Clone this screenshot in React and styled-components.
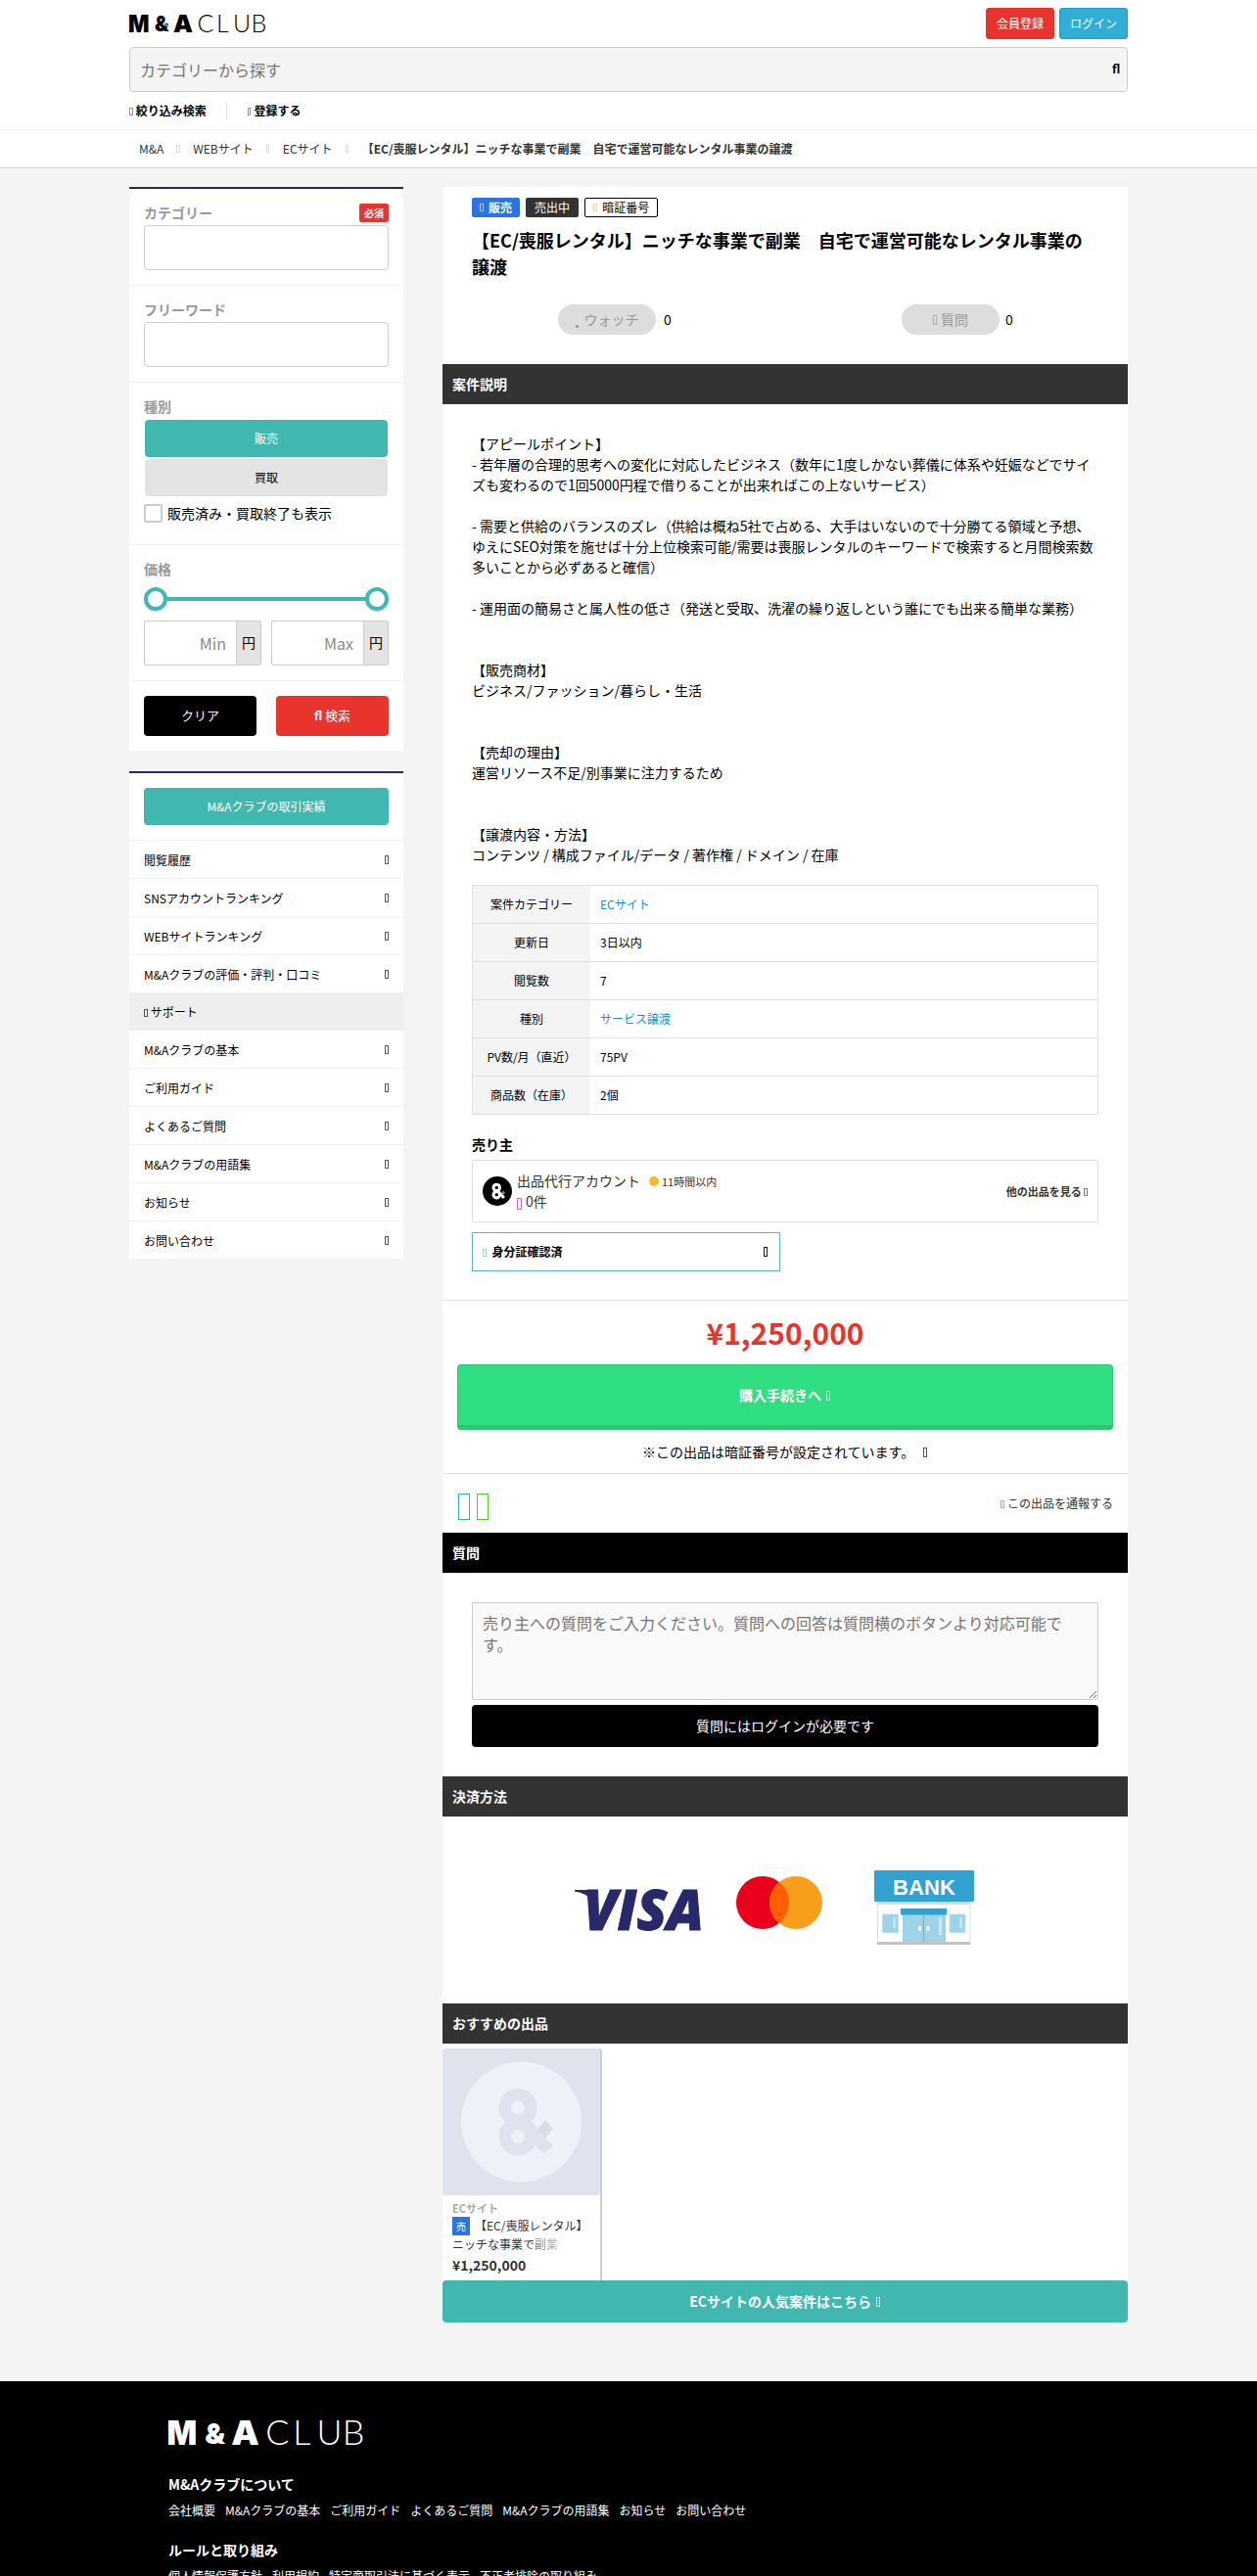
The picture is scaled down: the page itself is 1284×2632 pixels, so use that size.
import styled, { createGlobalStyle } from "styled-components"

const sideLinks = ["閲覧履歴", "SNSアカウントランキング", "WEBサイトランキング", "M&Aクラブの評価・評判・口コミ"]
const supportLinks = ["M&Aクラブの基本", "ご利用ガイド", "よくあるご質問", "M&Aクラブの用語集", "お知らせ", "お問い合わせ"]

const specs = [
    { name: "案件カテゴリー", value: "ECサイト", link: true },
    { name: "更新日", value: "3日以内" },
    { name: "閲覧数", value: "7" },
    { name: "種別", value: "サービス譲渡", link: true },
    { name: "PV数/月（直近）", value: "75PV" },
    { name: "商品数（在庫）", value: "2個" },
]

const description = `【アピールポイント】
- 若年層の合理的思考への変化に対応したビジネス（数年に1度しかない葬儀に体系や妊娠などでサイズも変わるので1回5000円程で借りることが出来ればこの上ないサービス）

- 需要と供給のバランスのズレ（供給は概ね5社で占める、大手はいないので十分勝てる領域と予想、ゆえにSEO対策を施せば十分上位検索可能/需要は喪服レンタルのキーワードで検索すると月間検索数多いことから必ずあると確信）

- 運用面の簡易さと属人性の低さ（発送と受取、洗濯の繰り返しという誰にでも出来る簡単な業務）


【販売商材】
ビジネス/ファッション/暮らし・生活


【売却の理由】
運営リソース不足/別事業に注力するため


【譲渡内容・方法】
コンテンツ / 構成ファイル/データ / 著作権 / ドメイン / 在庫`

const footerGroups = [
    { title: "M&Aクラブについて", links: ["会社概要", "M&Aクラブの基本", "ご利用ガイド", "よくあるご質問", "M&Aクラブの用語集", "お知らせ", "お問い合わせ"] },
    { title: "ルールと取り組み", links: ["個人情報保護方針", "利用規約", "特定商取引法に基づく表示", "不正者排除の取り組み"] },
]

const Teal = "#40b8b0"
const Red = "#e9342d"
const Line = "#f2f2f2"

const Logo = ({ width, height, color, dot }) => (
    <LogoSvg width={width} height={height} viewBox="0 0 140 18" preserveAspectRatio="none" fill={color}>
        <g fontFamily="Inter" fontWeight="900" fontSize="24.7">
            <text x="-1" y="18" textLength="21.5" lengthAdjust="spacingAndGlyphs">M</text>
            <text x="26" y="17" fontSize="21" textLength="14.5" lengthAdjust="spacingAndGlyphs">&amp;</text>
            <text x="45" y="18" textLength="20" lengthAdjust="spacingAndGlyphs">A</text>
        </g>
        <g fontFamily="Lato" fontWeight="300" fontSize="25">
            <text x="69.5" y="18">C</text>
            <text x="89" y="18">L</text>
            <text x="106" y="18">U</text>
            <text x="124.5" y="18">B</text>
        </g>
        {dot && <path d="M38 9l2 2-2 2-2-2z" fill={dot} />}
    </LogoSvg>
)

// round mark with the "&" built of two rings and a leg
const Mark = ({ ring, accent }) => (
    <g>
        <circle cx="77" cy="60.5" r="13.2" fill="none" stroke={ring} strokeWidth="12.6" />
        <circle cx="77" cy="90" r="13.2" fill="none" stroke={ring} strokeWidth="12.6" />
        <path d="M84 77L108 103.5" stroke={ring} strokeWidth="12.5" />
        <path d="M105 73.5l8 8.8-8 8.7-8.5-8.3z" fill={accent} />
    </g>
)

const Visa = () => (
    <svg width="130" height="42" viewBox="0 0 130 42">
        <path d="M0 1h14l5 12Q12 4 0 2.500z" fill="#29286b" />
        <text x="9" y="41.500" fontFamily="Open Sans" fontWeight="800" fontStyle="italic" fontSize="57" fill="#29286b" stroke="#29286b" strokeWidth="1" textLength="123" lengthAdjust="spacingAndGlyphs">VISA</text>
    </svg>
)

const Mastercard = () => (
    <svg width="88" height="54" viewBox="0 0 88 54">
        <circle cx="27" cy="27" r="27" fill="#eb001b" />
        <circle cx="61" cy="27" r="27" fill="#f79e1b" />
        <path d="M44 6a27 27 0 0 1 0 42a27 27 0 0 1 0-42z" fill="#ff5f00" />
    </svg>
)

const Bank = () => (
    <svg width="102" height="76" viewBox="0 0 102 76">
        <rect x="3.500" y="32" width="94.500" height="42" fill="#fff" stroke="#ddd" />
        <rect x="3" y="32" width="95" height="3" fill="#d5dade" />
        <rect width="102" height="32" rx="1" fill="#31a2d0" />
        <text x="51" y="24.500" textAnchor="middle" fontFamily="Liberation Sans" fontWeight="700" fontSize="22" fill="#fff" textLength="64">BANK</text>
        <rect x="29" y="44" width="44" height="30" fill="#9fd3e8" />
        <rect x="27" y="39" width="47" height="6.500" fill="#31a2d0" />
        <path d="M50.500 45v29" stroke="#6fb0cb" />
        <rect x="45" y="57" width="3" height="4.500" fill="#fff" />
        <rect x="53.500" y="57" width="3" height="4.500" fill="#fff" />
        <path d="M67.500 48v18" stroke="#d5edf6" strokeWidth="2.500" />
        <rect x="8.500" y="45" width="16" height="18.500" fill="#9fd3e8" stroke="#bcdfec" />
        <rect x="77" y="45" width="16" height="18.500" fill="#9fd3e8" stroke="#bcdfec" />
        <path d="M20.500 48v11M88.500 48v11" stroke="#d5edf6" strokeWidth="2" />
        <rect x="3" y="73" width="95" height="3" fill="#c3c3c3" />
    </svg>
)

const App = () => {
    return (
        <Page>
            <GlobalStyle />
            <Header>
                <Container>
                    <HeaderTop>
                        <Logo width={140} height={18} color="#000" dot="#2e9fd0" />
                        <HeaderButtons>
                            <HeaderButton $bg={Red}>会員登録</HeaderButton>
                            <HeaderButton $bg="#2fafd6" $edge="#2a9cc0">ログイン</HeaderButton>
                        </HeaderButtons>
                    </HeaderTop>
                    <SearchBar><span>カテゴリーから探す</span><SearchGlyph>fl</SearchGlyph></SearchBar>
                    <HeaderMenu>
                        <MenuItem><Icon $color="#555577" /> 絞り込み検索</MenuItem>
                        <MenuItem><Icon $color="#555577" /> 登録する</MenuItem>
                    </HeaderMenu>
                </Container>
            </Header>
            <Breadcrumb>
                <Container>
                    <Crumbs>
                        <span>M&amp;A</span><Icon $color="#ccc" />
                        <span>WEBサイト</span><Icon $color="#ccc" />
                        <span>ECサイト</span><Icon $color="#ccc" />
                        <b>【EC/喪服レンタル】ニッチな事業で副業　自宅で運営可能なレンタル事業の譲渡</b>
                    </Crumbs>
                </Container>
            </Breadcrumb>

            <Columns>
                <Sidebar>
                    <SideCard>
                        <Field>
                            <Label>カテゴリー<Required>必須</Required></Label>
                            <Input />
                        </Field>
                        <Field>
                            <Label>フリーワード</Label>
                            <Input />
                        </Field>
                        <Field>
                            <Label>種別</Label>
                            <Toggles>
                                <Toggle $active>販売</Toggle>
                                <Toggle>買取</Toggle>
                            </Toggles>
                            <CheckRow><CheckBox />販売済み・買取終了も表示</CheckRow>
                        </Field>
                        <Field>
                            <Label>価格</Label>
                            <Slider><Handle /><Track /><Handle /></Slider>
                            <PriceRow>
                                <PriceInput><PriceHint>Min</PriceHint><Unit>円</Unit></PriceInput>
                                <PriceInput><PriceHint>Max</PriceHint><Unit>円</Unit></PriceInput>
                            </PriceRow>
                        </Field>
                        <FormButtons>
                            <FormButton $bg="#000">クリア</FormButton>
                            <FormButton $bg={Red}><SearchGlyph $light>fl</SearchGlyph>&nbsp;検索</FormButton>
                        </FormButtons>
                    </SideCard>

                    <SideCard>
                        <ResultsWrap><Results>M&amp;Aクラブの取引実績</Results></ResultsWrap>
                        <LinkList>
                            {sideLinks.map((text) => <SideLink key={text}>{text}<Icon /></SideLink>)}
                        </LinkList>
                        <SupportTitle><Icon />&nbsp;サポート</SupportTitle>
                        <LinkList>
                            {supportLinks.map((text) => <SideLink key={text}>{text}<Icon /></SideLink>)}
                        </LinkList>
                    </SideCard>
                </Sidebar>

                <Main>
                    <Intro>
                        <Tags>
                            <Tag $bg="#2b74e2" $bold><Icon />販売</Tag>
                            <Tag $bg="#333" $pad="9px">売出中</Tag>
                            <Tag $outlined><Icon $color="#e8c94a" />暗証番号</Tag>
                        </Tags>
                        <Title>【EC/喪服レンタル】ニッチな事業で副業　自宅で運営可能なレンタル事業の譲渡</Title>
                        <Counters>
                            <Counter $gap="8px"><Pill><WatchGlyph />ウォッチ</Pill>0</Counter>
                            <Counter $gap="6px"><Pill><Icon />&nbsp;質問</Pill>0</Counter>
                        </Counters>
                    </Intro>

                    <Bar>案件説明</Bar>
                    <Detail>
                        <Description>{description}</Description>
                        <Specs>
                            {specs.map((spec) => (
                                <SpecRow key={spec.name}>
                                    <SpecName>{spec.name}</SpecName>
                                    <SpecValue $link={spec.link}>{spec.value}</SpecValue>
                                </SpecRow>
                            ))}
                        </Specs>
                        <SellerTitle>売り主</SellerTitle>
                        <Seller>
                            <svg width="30" height="30" viewBox="18.500 13.500 123 123">
                                <circle cx="80" cy="75" r="61.500" fill="#000" />
                                <Mark ring="#fff" accent="#2e9fd0" />
                            </svg>
                            <SellerInfo>
                                <div>出品代行アカウント<Online /><small>11時間以内</small></div>
                                <div><Icon $color="#d4578e" $size="17px" $drop="-3px" /> 0件</div>
                            </SellerInfo>
                            <OtherItems>他の出品を見る <Icon /></OtherItems>
                        </Seller>
                        <Identity>
                            <span><Icon $color="#6cb8d6" />&nbsp; 身分証確認済</span>
                            <Icon $size="15px" $drop="-2px" />
                        </Identity>
                    </Detail>

                    <Purchase>
                        <Price>¥1,250,000</Price>
                        <BuyButton>購入手続きへ&nbsp;<Icon $left="2px" /></BuyButton>
                        <Notice>※この出品は暗証番号が設定されています。&nbsp;<Icon $left="6px" /></Notice>
                    </Purchase>
                    <Share>
                        <ShareIcons><Icon $color="#1d9bf0" $size="39px" /><Icon $color="#3ace01" $size="39px" /></ShareIcons>
                        <span><Icon $color="#e0508f" /> この出品を通報する</span>
                    </Share>

                    <Bar $bg="#000">質問</Bar>
                    <Question>
                        <TextArea placeholder="売り主への質問をご入力ください。質問への回答は質問横のボタンより対応可能です。" />
                        <WideButton $bg="#000">質問にはログインが必要です</WideButton>
                    </Question>

                    <Bar>決済方法</Bar>
                    <Payments><Visa /><Mastercard /><Bank /></Payments>

                    <Bar>おすすめの出品</Bar>
                    <Recommend>
                        <ItemCard>
                            <svg width="161" height="150" viewBox="0 0 161 150">
                                <rect width="161" height="150" rx="3" fill="#e0e2ed" />
                                <circle cx="80.500" cy="75" r="61.500" fill="#eff1f8" />
                                <Mark ring="#e0e2ed" accent="#dadce0" />
                            </svg>
                            <ItemBody>
                                <ItemCategory>ECサイト</ItemCategory>
                                <ItemName><SaleMark>売</SaleMark>【EC/喪服レンタル】<br />ニッチな事業で<Fade>副業</Fade></ItemName>
                                <ItemPrice>¥1,250,000</ItemPrice>
                            </ItemBody>
                        </ItemCard>
                    </Recommend>
                    <WideButton $bg={Teal} $bold>ECサイトの人気案件はこちら&nbsp;<Icon $left="2px" /></WideButton>
                </Main>
            </Columns>

            <Footer>
                <Logo width={200} height={25} color="#fff" />
                {footerGroups.map((group) => (
                    <FooterGroup key={group.title}>
                        <FooterTitle>{group.title}</FooterTitle>
                        <FooterLinks>
                            {group.links.map((link) => <span key={link}>{link}</span>)}
                        </FooterLinks>
                    </FooterGroup>
                ))}
            </Footer>
        </Page>
    )
}

const GlobalStyle = createGlobalStyle`
*{ box-sizing: border-box; }
body{
    margin: 0;
    background: #f4f4f4;
    color: #000;
    font-family: "Noto Sans CJK JP", sans-serif;
    font-size: 14px;
    line-height: 1.5;
}
`

const Page = styled.div`
height: 2632px;
overflow: hidden;
`
const LogoSvg = styled.svg`
display: block;
overflow: visible;
`
// thin empty box, scales with the text beside it
const Icon = styled.i`
display: inline-block;
flex: none;
font-size: ${(p) => p.$size || "inherit"};
width: 0.3em;
height: 0.7em;
margin-left: ${(p) => p.$left || 0};
margin-right: 0.04em;
vertical-align: ${(p) => p.$drop || "baseline"};
border: 1px solid ${(p) => p.$color || "currentColor"};
opacity: ${(p) => (p.$size ? 0.9 : 0.65)};
`
const SearchGlyph = styled.span`
font-family: Lato, sans-serif;
font-size: 13px;
font-weight: 900;
color: ${(p) => (p.$light ? "#fff" : "#000")};
`
const WatchGlyph = styled.i`
display: inline-block;
width: 3px;
height: 3px;
margin-right: 6px;
vertical-align: -3px;
border-radius: 1px;
background: #999;
`
const Container = styled.div`
width: 1020px;
margin: 0 auto;
`
const Header = styled.header`
background: #fff;
height: 133px;
border-bottom: 1px solid ${Line};
`
const HeaderTop = styled.div`
display: flex;
align-items: center;
justify-content: space-between;
height: 48px;
`
const HeaderButtons = styled.div`
display: flex;
gap: 5px;
`
const HeaderButton = styled.div`
width: 70px;
height: 32px;
line-height: 32px;
text-align: center;
font-size: 12px;
color: #fff;
background: ${(p) => p.$bg};
border-radius: 4px;
box-shadow: inset 0 0 0 1px ${(p) => p.$edge || p.$bg};
`
const SearchBar = styled.div`
display: flex;
align-items: center;
justify-content: space-between;
height: 46px;
padding: 0 7px 0 10px;
border: 1px solid #ccc;
border-radius: 4px;
background: #f4f4f4;
font-size: 16px;
color: #757575;
`
const HeaderMenu = styled.div`
display: flex;
align-items: center;
height: 38px;
font-size: 12px;
font-weight: bold;
`
const MenuItem = styled.div`
line-height: 18px;
& + &{
    margin-left: 20px;
    padding-left: 21px;
    border-left: 1px solid #e0e0e0;
}
`
const Breadcrumb = styled.nav`
background: #fff;
height: 39px;
border-bottom: 1px solid #d5d5d5;
`
const Crumbs = styled.div`
display: flex;
align-items: center;
gap: 13px;
height: 38px;
padding-left: 10px;
font-size: 12px;
color: #333;
`
const Columns = styled.div`
display: flex;
justify-content: space-between;
align-items: flex-start;
width: 1020px;
height: 2261px;
margin: 0 auto;
padding-top: 19px;
`
const Sidebar = styled.aside`
width: 280px;
`
const SideCard = styled.section`
background: #fff;
border-top: 2px solid #2a2a5e;
margin-bottom: 21px;
`
const Field = styled.div`
padding: 15px;
border-bottom: 1px solid ${Line};
`
const Label = styled.div`
display: flex;
justify-content: space-between;
align-items: center;
height: 22px;
line-height: 19px;
padding-bottom: 3px;
font-weight: bold;
color: #999;
`
const Required = styled.span`
width: 30px;
height: 19px;
line-height: 19px;
text-align: center;
font-size: 10px;
color: #fff;
background: ${Red};
border-radius: 2px;
`
const Input = styled.div`
height: 46px;
border: 1px solid #ccc;
border-radius: 4px;
`
const Toggles = styled.div`
display: flex;
flex-direction: column;
gap: 2px;
padding: 1px 1px 0;
`
const Toggle = styled.div`
height: 38px;
line-height: 38px;
text-align: center;
font-size: 12px;
border-radius: 4px;
color: ${(p) => (p.$active ? "#fff" : "#000")};
background: ${(p) => (p.$active ? Teal : "#e4e4e4")};
`
const CheckRow = styled.div`
display: flex;
align-items: center;
gap: 5px;
height: 34px;
`
const CheckBox = styled.span`
width: 19px;
height: 19px;
border: 2px solid #ccc;
border-radius: 2px;
`
const Slider = styled.div`
display: flex;
align-items: center;
height: 24px;
margin: 6px 0 10px;
`
const Handle = styled.span`
width: 24px;
height: 24px;
border: 4px solid ${Teal};
border-radius: 50%;
box-shadow: 0 1px 2px rgba(80, 80, 200, 0.35);
`
const Track = styled.span`
flex: 1;
height: 4px;
background: ${Teal};
`
const PriceRow = styled.div`
display: flex;
gap: 10px;
`
const PriceInput = styled.div`
display: flex;
flex: 1;
height: 46px;
border: 1px solid #ccc;
border-radius: 2px;
`
const PriceHint = styled.span`
flex: 1;
padding-right: 10px;
line-height: 44px;
text-align: right;
font-size: 16px;
color: #888;
`
const Unit = styled.span`
width: 25px;
line-height: 43px;
text-align: center;
border-left: 1px solid #ccc;
background: #e4e4e4;
`
const FormButtons = styled.div`
display: flex;
justify-content: space-between;
padding: 15px;
`
const FormButton = styled.div`
width: 115px;
height: 41px;
line-height: 40px;
text-align: center;
font-size: 13px;
color: #fff;
background: ${(p) => p.$bg};
border-radius: 4px;
`
const ResultsWrap = styled.div`
padding: 15px;
border-bottom: 1px solid ${Line};
`
const Results = styled.div`
height: 38px;
line-height: 38px;
text-align: center;
font-size: 12px;
color: #fff;
background: ${Teal};
border-radius: 4px;
`
const LinkList = styled.div`
font-size: 12px;
`
const SideLink = styled.div`
display: flex;
justify-content: space-between;
align-items: center;
height: 39px;
padding: 1px 15px 0;
line-height: 17px;
border-bottom: 1px solid ${Line};
&:last-child{
    height: 38px;
    border-bottom: 0;
}
`
const SupportTitle = styled.div`
height: 39px;
line-height: 39px;
padding: 0 15px;
font-size: 12px;
background: #eee;
`
const Main = styled.main`
width: 700px;
background: #fff;
`
const Intro = styled.div`
height: 181px;
padding: 11px 30px 0;
`
const Tags = styled.div`
display: flex;
gap: 6px;
`
const Tag = styled.span`
display: flex;
align-items: center;
gap: 5px;
height: 20px;
line-height: 18px;
padding: 0 ${(p) => p.$pad || "8px"};
font-size: 12px;
font-weight: ${(p) => (p.$bold ? 700 : 400)};
color: ${(p) => (p.$outlined ? "#000" : "#fff")};
background: ${(p) => p.$bg || "#fff"};
border: ${(p) => (p.$outlined ? "1px solid #000" : "0")};
border-radius: 2px;
`
const Title = styled.h1`
margin: 10px 0 25px;
font-size: 18px;
line-height: 27px;
`
const Counters = styled.div`
display: flex;
padding: 0 20px 0 88px;
`
const Counter = styled.div`
display: flex;
align-items: center;
gap: ${(p) => p.$gap};
width: 351px;
&:last-child{ width: 110px; }
`
const Pill = styled.span`
flex: none;
width: 100px;
height: 31px;
line-height: 31px;
text-align: center;
color: #999;
background: #ddd;
border-radius: 16px;
`
const Bar = styled.h2`
margin: 0;
height: 41px;
line-height: 41px;
padding-left: 10px;
font-size: 14px;
color: #fff;
background: ${(p) => p.$bg || "#333"};
`
const Detail = styled.div`
height: 915px;
padding: 30px 30px 0;
`
const Description = styled.div`
white-space: pre-wrap;
line-height: 21px;
margin-bottom: 20px;
`
const Specs = styled.div`
border: 1px solid #e0e0e0;
border-bottom: 0;
font-size: 12px;
`
const SpecRow = styled.div`
display: flex;
height: 39px;
line-height: 38px;
border-bottom: 1px solid #e0e0e0;
`
const SpecName = styled.span`
width: 120px;
text-align: center;
background: #f4f4f4;
`
const SpecValue = styled.span`
padding-left: 10px;
color: ${(p) => (p.$link ? "#1490dd" : "#000")};
`
const SellerTitle = styled.h3`
margin: 20px 0 5px;
font-size: 14px;
line-height: 21px;
`
const Seller = styled.div`
display: flex;
align-items: center;
height: 64px;
padding: 0 10px;
border: 1px solid #e0e0e0;
border-radius: 2px;
color: #333;
`
const SellerInfo = styled.div`
flex: 1;
padding: 0 0 1px 5px;
line-height: 20.5px;
& small{ font-size: 11px; }
`
const Online = styled.span`
display: inline-block;
width: 10px;
height: 10px;
margin: 0 3px 0 9px;
border-radius: 50%;
background: #fdb827;
`
const OtherItems = styled.span`
font-size: 11px;
font-weight: bold;
`
const Identity = styled.div`
display: flex;
justify-content: space-between;
align-items: center;
width: 315px;
height: 40px;
margin-top: 10px;
padding: 0 11px 0 10px;
border: 1px solid #5bb0cf;
font-size: 12px;
font-weight: bold;
`
const Purchase = styled.div`
height: 178px;
padding: 10px 15px 0;
text-align: center;
border-top: 1px solid #e0e0e0;
border-bottom: 1px solid #e0e0e0;
`
const Price = styled.div`
font-size: 30px;
font-weight: bold;
line-height: 45px;
color: ${Red};
`
const BuyButton = styled.div`
height: 67px;
margin-top: 10px;
line-height: 61px;
font-weight: bold;
color: #fff;
background: #30df82;
border: 1px solid #2fc76c;
border-bottom-width: 5px;
border-radius: 4px;
`
const Notice = styled.div`
margin-top: 12px;
line-height: 21px;
`
const Share = styled.div`
display: flex;
justify-content: space-between;
align-items: center;
height: 60px;
padding: 0 15px;
font-size: 12px;
color: #333;
`
const ShareIcons = styled.div`
display: flex;
gap: 6px;
padding: 7px 0 0 1px;
`
const Question = styled.div`
height: 208px;
padding: 30px 30px 0;
`
const TextArea = styled.textarea`
display: block;
width: 640px;
height: 100px;
margin-bottom: 5px;
padding: 10px;
font-family: "Noto Sans CJK JP", sans-serif;
font-size: 16px;
line-height: 21.5px;
border: 1px solid #ccc;
border-radius: 2px;
background: #f9f9f9;
`
const WideButton = styled.div`
height: 43px;
line-height: 43px;
text-align: center;
font-weight: ${(p) => (p.$bold ? 700 : 400)};
color: #fff;
background: ${(p) => p.$bg};
border-radius: 4px;
`
const Payments = styled.div`
display: flex;
height: 191px;
padding: 55px 0 0 135px;
& svg:nth-child(1){ margin: 19px 35px 0 0; overflow: visible; }
& svg:nth-child(2){ margin: 6px 53px 0 0; }
`
const Recommend = styled.div`
display: flex;
height: 242px;
padding-top: 5px;
`
const ItemCard = styled.div`
width: 161px;
background: #fff;
border-radius: 3px 3px 0 0;
box-shadow: 2px 0 1px rgba(0, 0, 0, 0.2);
& svg{ display: block; }
`
const ItemBody = styled.div`
padding: 5px 10px 0;
color: #333;
`
const ItemCategory = styled.div`
font-size: 11px;
line-height: 17px;
font-weight: bold;
color: #aaa;
`
const ItemName = styled.div`
font-size: 12px;
line-height: 18px;
height: 38px;
white-space: nowrap;
`
const SaleMark = styled.span`
display: inline-block;
width: 18px;
height: 19px;
line-height: 19px;
margin-right: 5px;
text-align: center;
font-size: 10px;
color: #fff;
background: #2b74e2;
`
const Fade = styled.span`
background: linear-gradient(to right, #777, #bbb);
background-clip: text;
color: transparent;
`
const ItemPrice = styled.div`
font-weight: bold;
line-height: 21px;
margin-top: 1px;
`
const Footer = styled.footer`
height: 199px;
padding: 40px 172px 0;
color: #fff;
background: #000;
`
const FooterGroup = styled.div`
margin-bottom: 21px;
svg + &{ margin-top: 30px; }
`
const FooterTitle = styled.div`
font-weight: bold;
line-height: 21px;
margin-bottom: 7px;
`
const FooterLinks = styled.div`
display: flex;
gap: 10px;
font-size: 12px;
line-height: 18px;
`

export default App
